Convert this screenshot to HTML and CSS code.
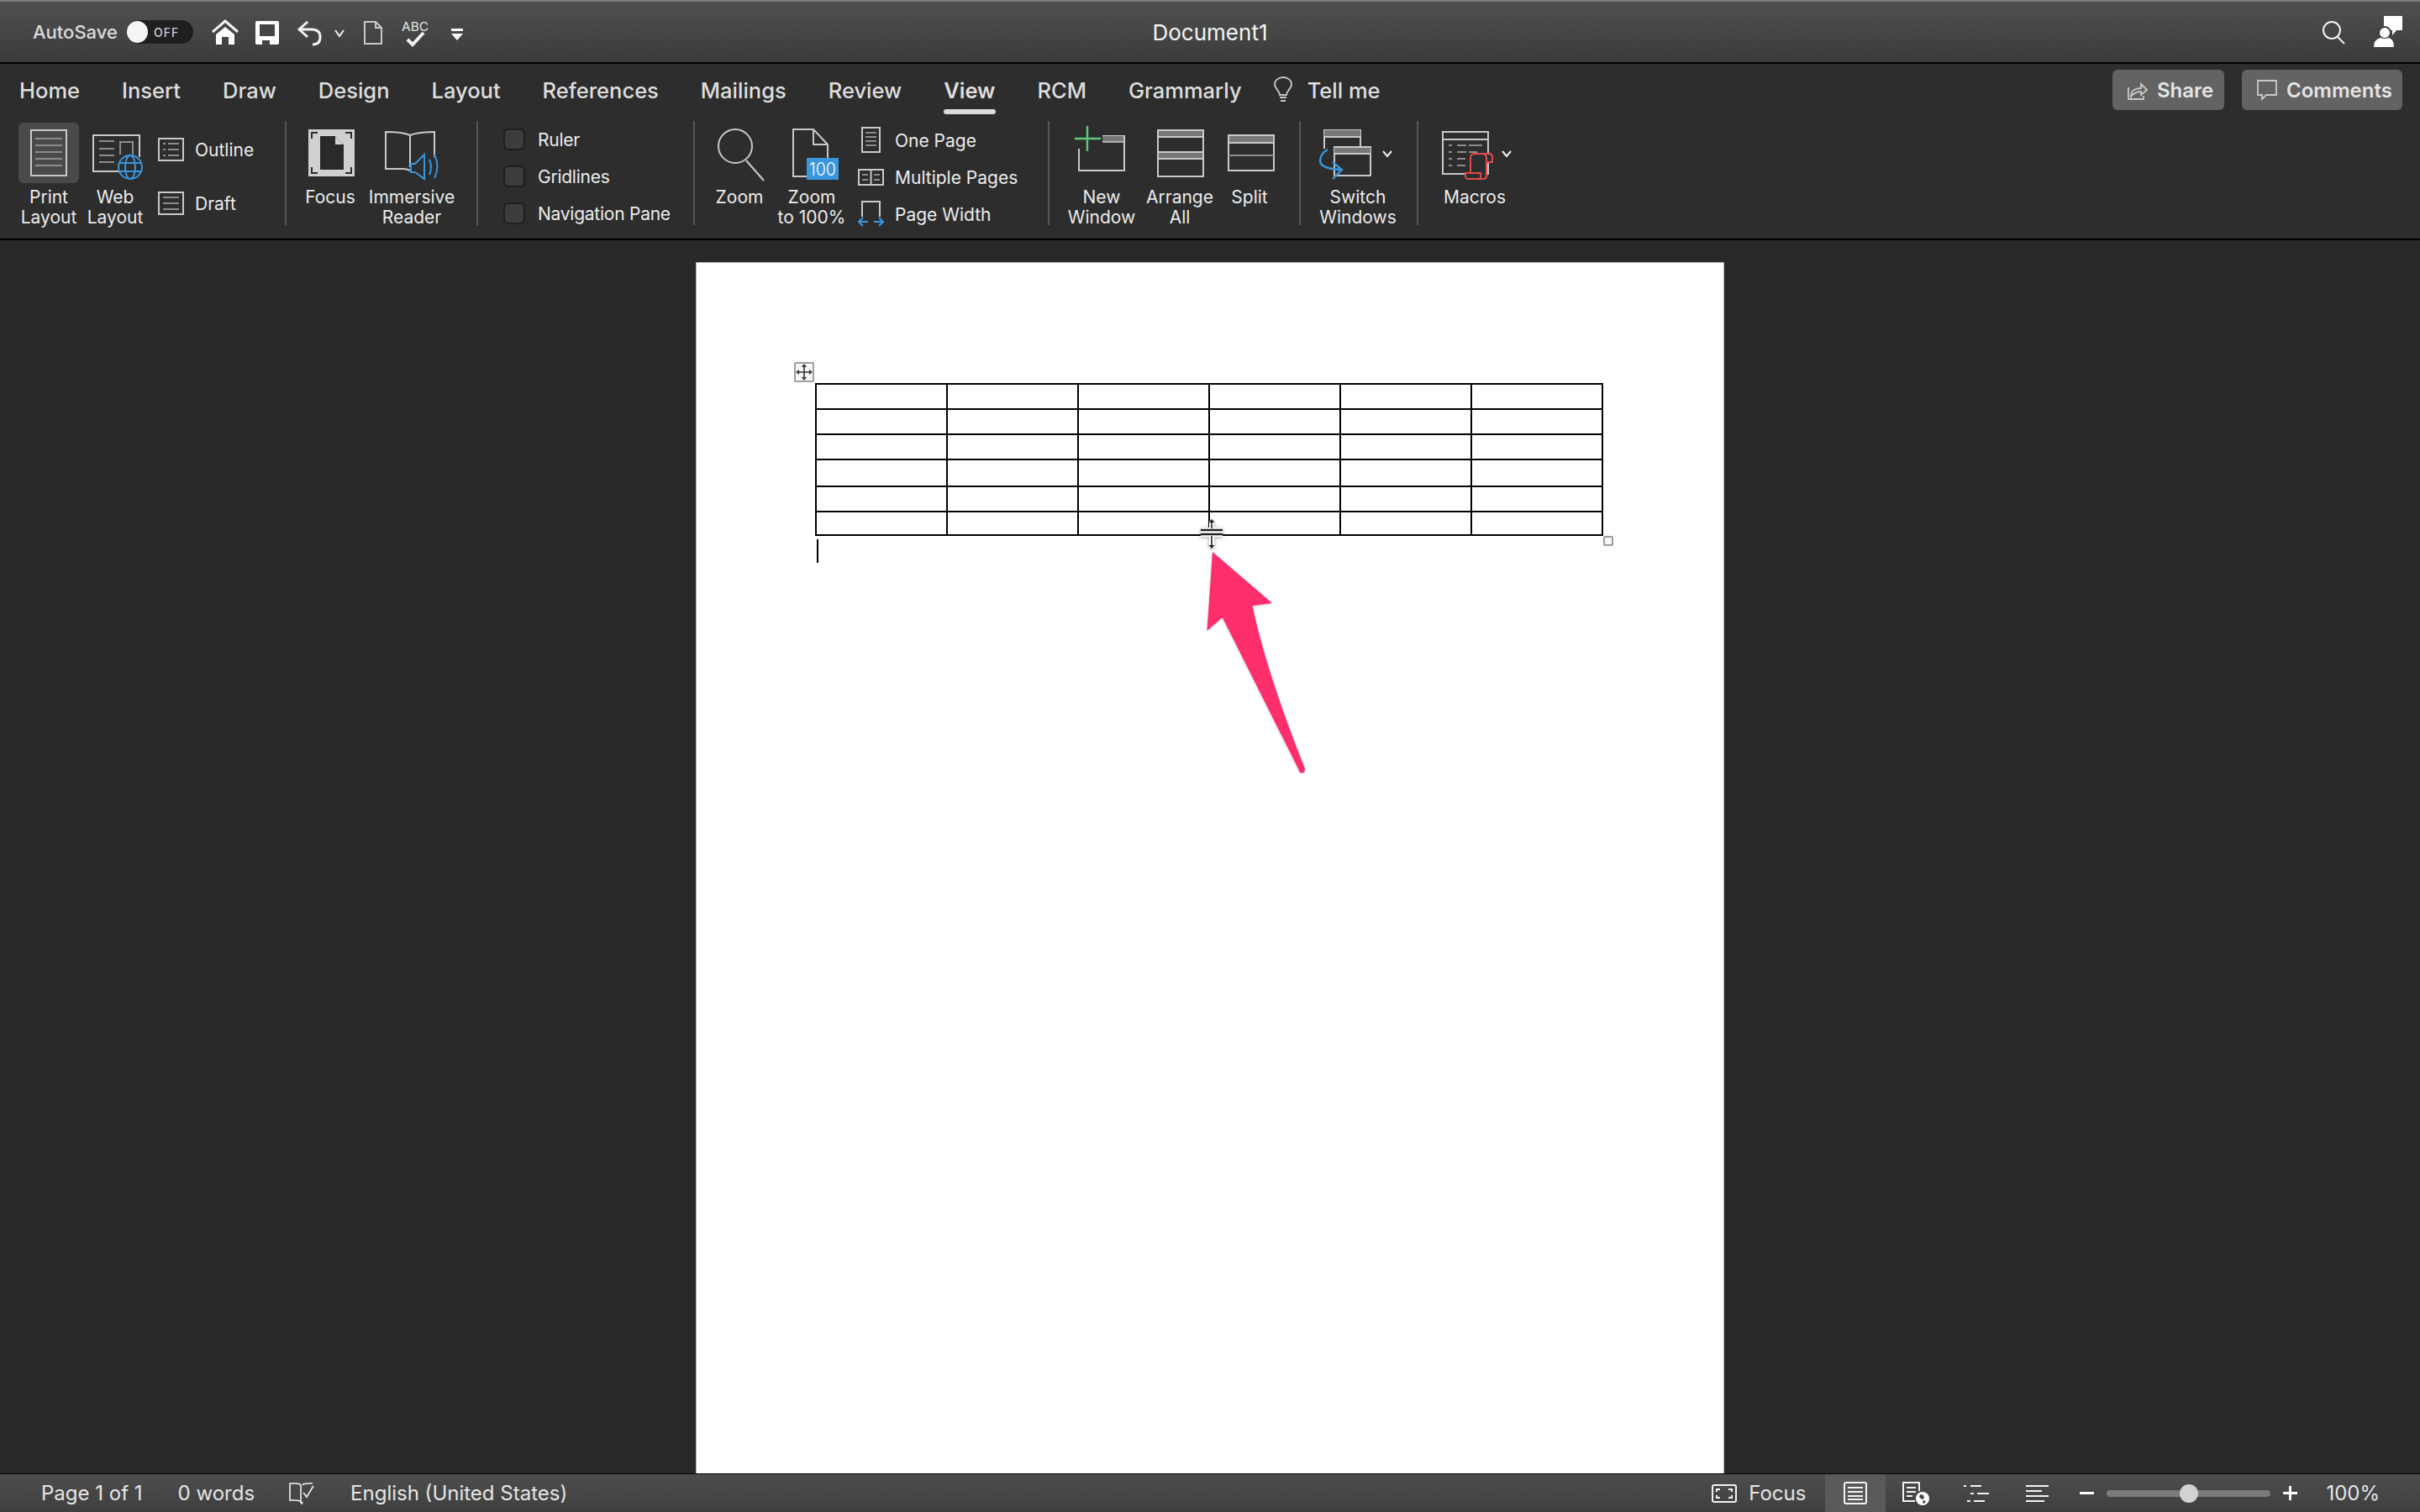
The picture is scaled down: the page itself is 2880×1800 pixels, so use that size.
FILE: index.html
```html
<!DOCTYPE html>
<html>
  <head>
    <title>Document1</title>
    <link rel="stylesheet" href="styles.css">
  </head>
  <body>
    <!-- Title bar -->
    <header class="titlebar">
      <div class="title-left">
        <span class="autosave">AutoSave</span>
        <div class="toggle"><span class="knob"></span><span class="toggle-text">OFF</span></div>
        <svg class="qat" width="52" height="40" viewBox="0 0 52 40"><path class="wh-line thick" d="M1 20L16 7l15 13"/><path class="wh" d="M5 23l11-9 11 9v12h-7v-9h-8v9H5z"/></svg>
        <svg class="qat" width="50" height="40" viewBox="0 0 50 40"><rect class="wh" x="0" y="7" width="28" height="28" rx="2"/><rect class="title-dark" x="5" y="11" width="18" height="14"/><rect class="title-dark" x="8" y="30" width="9" height="5"/></svg>
        <svg class="qat" width="44" height="40" viewBox="0 0 44 40"><path class="wh-line thick" d="M12 8L2 17l10 9M3 17h14q10 0 10 9t-9 9"/></svg>
        <svg class="qat" width="35" height="40" viewBox="0 0 35 40"><path class="wh-line" d="M1 18l5 7 5-7"/></svg>
        <svg class="qat" width="45" height="40" viewBox="0 0 45 40"><path class="ln" d="M1 8h13l7 7v19H1zM14 8v7h7"/></svg>
        <svg class="qat" width="59" height="40" viewBox="0 0 59 40"><text class="abc" x="0" y="19" textLength="32" lengthAdjust="spacingAndGlyphs">ABC</text><path class="wh-line thick4" d="M7 29l6 6L26 21"/></svg>
        <svg class="qat" width="14" height="40" viewBox="0 0 14 40"><rect class="wh" x="0" y="16" width="14" height="3"/><path class="wh" d="M0 22h14l-7 8z"/></svg>
      </div>
      <div class="doc-title">Document1</div>
      <div class="title-right">
        <svg width="28" height="30" viewBox="0 0 28 30"><circle class="wh-line" cx="12" cy="13" r="10"/><path class="wh-line" d="M19 21l8 8"/></svg>
        <svg width="36" height="38" viewBox="0 0 36 38"><path class="wh" d="M13 0h21a1 1 0 0 1 1 1v15a1 1 0 0 1-1 1h-6l-5 6v-6h-10z"/><circle class="wh halo" cx="14" cy="20" r="7"/><path class="wh" d="M1 37q0-9 8-11 5 2 10 0 6 2 6 11z"/></svg>
      </div>
    </header>

    <!-- Ribbon -->
    <section class="ribbon">
      <nav class="tabs">
        <span>Home</span>
        <span>Insert</span>
        <span>Draw</span>
        <span>Design</span>
        <span>Layout</span>
        <span>References</span>
        <span>Mailings</span>
        <span>Review</span>
        <span class="tab-active">View</span>
        <span>RCM</span>
        <span>Grammarly</span>
        <span class="tell-me">
          <svg width="22" height="30" viewBox="0 0 22 30"><path class="ln thin" d="M7 21c0-5-6-7-6-13a10 8 0 0 1 20 0c0 6-6 8-6 13zM7 24h8M8 28h6"/></svg>
          Tell me
        </span>
        <div class="tab-buttons">
          <div class="action-btn btn-share">
            <svg width="24" height="24" viewBox="0 0 24 24"><path class="ln thin" d="M1 9v14h18v-4M4 20c0-7 5-10 12-10V5l7 7-7 6v-4c-6 0-9 2-12 6z"/></svg>
            Share
          </div>
          <div class="action-btn btn-comments">
            <svg width="24" height="24" viewBox="0 0 24 24"><path class="ln thin" d="M1 1h22v17H11l-5 5v-5H1z"/></svg>
            Comments
          </div>
        </div>
      </nav>

      <div class="tools">
        <div class="group group-views">
          <div class="big w-print selected">
            <svg viewBox="0 0 72 72"><rect class="ln" x="15" y="9" width="42" height="54"/><path class="ln-mid" d="M20 19h32M20 27h32M20 35h32M20 43h32M20 51h32"/></svg>
            <div class="label">Print<br>Layout</div>
          </div>
          <div class="big w-web">
            <svg viewBox="0 0 76 72"><path class="ln" d="M54 58H12V15h55v26"/><path class="ln-mid" d="M19 22h18M19 31h18M19 39h18M19 47h18M44 38V23h15v15"/><circle class="globe" cx="56" cy="53" r="14"/><ellipse class="blue" cx="56" cy="53" rx="6" ry="14"/><path class="blue" d="M43 48h26M43 58h26"/></svg>
            <div class="label">Web<br>Layout</div>
          </div>
          <div class="small-col col-views">
            <div class="small-row">
              <svg width="31" height="28" viewBox="0 0 31 28"><rect class="ln" x="1" y="1" width="29" height="26"/><path class="ln-mid" d="M6 7h3M12 7h13M6 14h3M12 14h13M6 21h3M12 21h13"/></svg>
              <span>Outline</span>
            </div>
            <div class="small-row">
              <svg width="31" height="28" viewBox="0 0 31 28"><rect class="ln" x="1" y="1" width="29" height="26"/><path class="ln-mid" d="M6 7h19M6 14h19M6 21h19"/></svg>
              <span>Draft</span>
            </div>
          </div>
        </div>

        <div class="group group-focus">
          <div class="big w-focus">
            <svg viewBox="0 0 60 72"><rect class="focus-bg" x="4" y="8" width="55" height="56"/><path class="focus-page" d="M18 16h18l10 10v30H18z"/><path class="focus-fold" d="M36 16l10 10H36z"/><path class="focus-corner" d="M8 19v-7h7M48 12h7v7M8 53v7h7M48 60h7v-7"/></svg>
            <div class="label">Focus</div>
          </div>
          <div class="big w-immersive">
            <svg viewBox="0 0 112 72"><path class="ln" d="M54 57q-4-2-8-2H25V11q20 0 29 4 9-4 29-4v30M54 15v38"/><path class="blue-fill" d="M55 49h5l11-11v29L60 59h-5z"/><path class="blue" d="M77 44q4 9 0 18M83 38q7 14 0 28"/></svg>
            <div class="label">Immersive<br>Reader</div>
          </div>
        </div>

        <div class="group group-show">
          <div class="check-col">
            <label class="check-row"><span class="check"></span>Ruler</label>
            <label class="check-row"><span class="check"></span>Gridlines</label>
            <label class="check-row"><span class="check"></span>Navigation Pane</label>
          </div>
        </div>

        <div class="group group-zoom">
          <div class="big w-zoom">
            <svg viewBox="0 0 60 72"><circle class="ln" cx="25" cy="28" r="20"/><path class="ln" d="M38 45l21 24"/></svg>
            <div class="label">Zoom</div>
          </div>
          <div class="big w-zoom100">
            <svg viewBox="0 0 84 72"><path class="ln" d="M36 64H20V8h24l17 18v16M44 8v18h17"/><rect class="blue-box" x="36" y="42" width="38" height="26"/><text class="hundred" x="39" y="63" textLength="32" lengthAdjust="spacingAndGlyphs">100</text></svg>
            <div class="label">Zoom<br>to 100%</div>
          </div>
          <div class="page-col">
            <div class="small-row">
              <svg width="31" height="32" viewBox="0 0 31 32"><rect class="ln" x="5" y="1" width="21" height="29"/><path class="ln-mid" d="M9 7h13M9 12h13M9 17h13M9 22h13"/></svg>
              <span>One Page</span>
            </div>
            <div class="small-row">
              <svg width="31" height="32" viewBox="0 0 31 32"><rect class="ln" x="1" y="7" width="29" height="18"/><path class="ln" d="M15.5 7v18"/><path class="ln-mid" d="M5 13h7M5 19h7M19 13h7M19 19h7"/></svg>
              <span>Multiple Pages</span>
            </div>
            <div class="small-row">
              <svg width="31" height="32" viewBox="0 0 31 32"><path class="ln" d="M5 19V1h21v18"/><path class="blue" d="M12 25H1m5-5l-5 5 5 5M19 25h11m-5-5l5 5-5 5"/></svg>
              <span>Page Width</span>
            </div>
          </div>
        </div>

        <div class="group group-window">
          <div class="big w-new">
            <svg viewBox="0 0 84 72"><path class="ln" d="M15 31v26h54V16H43"/><rect class="fl" x="43" y="16" width="25" height="7"/><path class="ln-thin" d="M43 23h26"/><path class="green" d="M10 19h31M25 4v30"/></svg>
            <div class="label">New<br>Window</div>
          </div>
          <div class="big w-arrange">
            <svg viewBox="0 0 72 72"><rect class="fl" x="9" y="8" width="55" height="9"/><rect class="fl" x="9" y="35" width="55" height="8"/><rect class="ln" x="10" y="9" width="54" height="55"/><path class="ln" d="M10 17h54M10 35h54M10 43h54"/></svg>
            <div class="label">Arrange<br>All</div>
          </div>
          <div class="big w-split">
            <svg viewBox="0 0 60 72"><rect class="fl" x="5" y="15" width="54" height="8"/><rect class="ln" x="5" y="15" width="54" height="42"/><path class="ln" d="M5 24h54"/><path class="ln-mid" d="M5 39h54"/></svg>
            <div class="label">Split</div>
          </div>
        </div>

        <div class="group group-switch">
          <div class="big w-switch">
            <svg viewBox="0 0 96 72"><path class="ln" d="M8 31V9h43v19"/><rect class="fl" x="8" y="9" width="43" height="7"/><path class="ln" d="M8 17h43"/><rect class="ln" x="20" y="29" width="43" height="34"/><rect class="fl" x="20" y="30" width="43" height="6"/><path class="ln" d="M20 37h43"/><path class="blue blue-fat" d="M12 32q-9 5-9 14 1 9 26 10M18 47l11 9-11 11"/><path class="wh-line" d="M78 34l5 6 5-6"/></svg>
            <div class="label">Switch<br>Windows</div>
          </div>
        </div>

        <div class="group group-macros">
          <div class="big w-macros">
            <svg viewBox="0 0 90 72"><rect class="ln" x="7" y="11" width="54" height="50"/><path class="ln" d="M7 20h54"/><path class="ln-mid" d="M14 27h4M24 27h11M38 27h16M14 35h4M24 35h11M38 35h10M14 43h4M24 43h10M14 51h4M24 51h10"/><path class="scroll" d="M40 60V42q0-5 5-5h17q4 0 4 4v6h-7v17q0 3-4 3H38q-4 0-4-3v-4h6z"/><path class="scroll-line" d="M59 47v-5q0-5-5-5M40 60h12v7"/><path class="wh-line" d="M78 34l5 6 5-6"/></svg>
            <div class="label">Macros</div>
          </div>
        </div>
      </div>
    </section>

    <!-- Document area -->
    <main class="workspace">
      <div class="page">
        <div class="table-wrap">
          <span class="move-handle">
            <svg width="20" height="20" viewBox="0 0 20 20"><path class="move-line" d="M10 2v16M2 10h16"/><path class="move-head" d="M10 0l3 4H7zM10 20l3-4H7zM0 10l4-3v6zM20 10l-4-3v6z"/></svg>
          </span>
          <span class="resize-handle"></span>
          <table class="doc-table">
            <tr><td></td><td></td><td></td><td></td><td></td><td></td></tr>
            <tr><td></td><td></td><td></td><td></td><td></td><td></td></tr>
            <tr><td></td><td></td><td></td><td></td><td></td><td></td></tr>
            <tr class="row-tall"><td></td><td></td><td></td><td></td><td></td><td></td></tr>
            <tr><td></td><td></td><td></td><td></td><td></td><td></td></tr>
            <tr class="row-short"><td></td><td></td><td></td><td></td><td></td><td></td></tr>
          </table>
          <div class="caret"></div>
        </div>

        <svg class="row-cursor" width="32" height="36" viewBox="0 0 32 36">
          <path class="cursor-halo" d="M16 2v32M3 13h26M3 18h26"/>
          <path class="cursor-line" d="M16 3v8M16 20v12"/>
          <path class="cursor-bar" d="M3 13h26M3 18h26"/>
          <path class="cursor-head" d="M16 0l3.500 4h-7zM16 35l3.500-4h-7z"/>
        </svg>

        <svg class="arrow" width="135" height="280" viewBox="0 0 135 280">
          <path class="arrow-fill" d="M13 7L84 68 60.500 71Q77 150 123 265 123 270 119.500 270 116 270 115 265L24.800 85 6.500 100.700z"/>
        </svg>
      </div>
    </main>

    <!-- Status bar -->
    <footer class="statusbar">
      <span class="stat-pages">Page 1 of 1</span>
      <span class="stat-words">0 words</span>
      <svg class="stat-book" width="30" height="26" viewBox="0 0 30 26"><path class="wh-line thin" d="M14 23q-2-2-7-2H1V1h6q6 0 7 2v20q0 1 1 2 1-1 1-2M16 3q1-2 7-2h5"/><path class="wh-line thin" d="M17 12l4 5 8-13"/></svg>
      <span class="stat-lang">English (United States)</span>

      <div class="stat-right">
        <svg width="30" height="22" viewBox="0 0 30 22"><rect class="wh-line" x="1" y="1" width="28" height="20" rx="2"/><path class="wh-line" d="M6 9V6h4M20 6h4v3M6 13v3h4M24 13v3h-4"/></svg>
        <span class="stat-focus">Focus</span>
        <div class="view-slots">
          <div class="view-slot view-on">
            <svg width="28" height="27" viewBox="0 0 28 27"><rect class="wh-line" x="1" y="1" width="26" height="25" rx="2"/><path class="wh-line" d="M5 7h18M5 12h18M5 17h18M5 21h18"/></svg>
          </div>
          <div class="view-slot">
            <svg width="32" height="28" viewBox="0 0 32 28"><path class="wh-line" d="M15 23H1V1h19v10M5 7h11M5 12h11M5 17h7"/><circle class="wh" cx="24" cy="20" r="8"/><path class="status-dark" d="M21 15l4 1 1 4-3 1-3-3zM25 22l3 1-2 3-2-1z"/></svg>
          </div>
          <div class="view-slot">
            <svg width="32" height="22" viewBox="0 0 32 22"><path class="wh-line" d="M1 2h3M9 2h13M9 11h4M17 11h14M5 20h4M13 20h13"/></svg>
          </div>
          <div class="view-slot">
            <svg width="28" height="22" viewBox="0 0 28 22"><path class="wh-line" d="M1 2h27M1 8h19M1 14h27M1 20h22"/></svg>
          </div>
        </div>
        <div class="zoom-ctrl">
          <svg width="17" height="17" viewBox="0 0 17 17"><rect class="wh" x="0" y="7" width="17" height="3"/></svg>
          <div class="slider"><span class="slider-thumb"></span></div>
          <svg width="17" height="17" viewBox="0 0 17 17"><rect class="wh" x="0" y="7" width="17" height="3"/><rect class="wh" x="7" y="0" width="3" height="17"/></svg>
        </div>
        <span class="stat-zoom">100%</span>
      </div>
    </footer>
  </body>
</html>
```

FILE: styles.css
```css
* {
  box-sizing: border-box;
}

html,
body {
  margin: 0;
  height: 1800px;
  overflow: hidden;
}

body {
  display: flex;
  flex-direction: column;
  font-family: Inter, "Noto Sans", sans-serif;
  color: #e6e6e6;
  background-color: #292929;
}

svg {
  display: block;
  flex: none;
  overflow: visible;
}

/* Shared icon strokes */
.ln {
  fill: none;
  stroke: #c9c9c9;
  stroke-width: 2;
}

.ln.thin {
  stroke-width: 1.8;
}

.ln-mid {
  fill: none;
  stroke: #8c8c8c;
  stroke-width: 2;
}

.ln-thin {
  fill: none;
  stroke: #c9c9c9;
  stroke-width: 1.5;
}

.fl {
  fill: #777;
}

.wh {
  fill: #fff;
}

.wh-line {
  fill: none;
  stroke: #f2f2f2;
  stroke-width: 2;
}

.wh-line.thick {
  stroke-width: 3;
}

.wh-line.thick4 {
  stroke-width: 4;
}

.wh-line.thin {
  stroke-width: 1.6;
}

.blue {
  fill: none;
  stroke: #3a96dd;
  stroke-width: 2;
}

.blue-fat {
  stroke-width: 2.4;
}

.blue-fill {
  fill: #2d2d2d;
  stroke: #3a96dd;
  stroke-width: 2;
}

.green {
  fill: none;
  stroke: #5fc77a;
  stroke-width: 2.4;
}

/* Title bar */
.titlebar {
  display: grid;
  grid-template-columns: 1fr auto 1fr;
  align-items: center;
  height: 76px;
  flex: none;
  border-top: 2px solid #7d7d7d;
  border-bottom: 2px solid #000;
  background: linear-gradient(#505050, #3b3b3b);
}

.title-left {
  display: flex;
  align-items: center;
  padding-left: 39px;
}

.autosave {
  width: 112px;
  font-size: 22px;
  font-weight: 500;
  color: #dcdcdc;
  white-space: nowrap;
}

.toggle {
  display: flex;
  align-items: center;
  width: 79px;
  height: 28px;
  margin-right: 22px;
  border-radius: 14px;
  background-color: #1f1f1f;
}

.knob {
  width: 25px;
  height: 26px;
  border-radius: 50%;
  background-color: #f4f4f4;
}

.toggle-text {
  margin-left: 7px;
  font-size: 14px;
  font-weight: 500;
  letter-spacing: 1px;
  color: #cfcfcf;
}

.qat {
  height: 40px;
}

.title-dark {
  fill: #454545;
}

.abc {
  font-size: 15px;
  fill: #e6e6e6;
}

.doc-title {
  font-size: 26px;
  font-weight: 400;
  color: #f5f5f5;
}

.title-right {
  display: flex;
  justify-content: flex-end;
  align-items: center;
  gap: 33px;
  padding-right: 20px;
}

.halo {
  stroke: #404040;
  stroke-width: 2;
}

/* Ribbon */
.ribbon {
  height: 210px;
  flex: none;
  border-bottom: 2px solid #000;
  background-color: #2d2d2d;
}

.tabs {
  display: flex;
  align-items: center;
  gap: 50px;
  height: 62px;
  padding: 0 21px 0 23px;
  font-size: 25.5px;
  font-weight: 500;
  color: #dedede;
}

.tabs span {
  white-space: nowrap;
}

.tab-active {
  position: relative;
  font-weight: 600;
}

.tab-active::after {
  content: "";
  position: absolute;
  left: 0;
  right: 0;
  bottom: -13px;
  height: 6px;
  border-radius: 3px;
  background-color: #dcdcdc;
}

.tell-me {
  display: flex;
  align-items: center;
  gap: 18px;
  margin-left: -12px;
}

.tab-buttons {
  display: flex;
  gap: 21px;
  margin-left: auto;
}

.action-btn {
  display: flex;
  align-items: center;
  height: 48px;
  border-radius: 6px;
  font-size: 24px;
  font-weight: 600;
  color: #e4e4e4;
  background-color: #636363;
}

.btn-share {
  gap: 11px;
  width: 133px;
  padding-left: 18px;
}

.btn-comments {
  gap: 11px;
  width: 191px;
  padding-left: 18px;
}

.tools {
  display: flex;
  padding: 6px 0 0 0;
  font-size: 21px;
  color: #ececec;
}

.group {
  display: flex;
  height: 124px;
  border-right: 2px solid #555;
}

.group-views {
  width: 341px;
  padding-left: 22px;
}

.group-focus {
  width: 228px;
  padding-left: 22px;
  gap: 11px;
}

.group-show {
  width: 258px;
  padding-left: 30px;
}

.group-zoom {
  width: 422px;
  padding-left: 23px;
  gap: 14px;
}

.group-window {
  width: 299px;
  padding-left: 20px;
  gap: 15px;
}

.group-switch {
  width: 140px;
  padding-left: 20px;
}

.group-macros {
  padding-left: 22px;
  border-right: none;
}

.big {
  display: flex;
  flex-direction: column;
  align-items: center;
  flex: none;
  padding-top: 2px;
  text-align: center;
}

.big svg {
  width: 100%;
  height: 72px;
}

.label {
  margin-top: 5px;
  line-height: 24px;
  white-space: nowrap;
}

.selected svg {
  border-radius: 6px;
  background-color: #4a4a4a;
}

.w-print {
  width: 72px;
}

.w-web {
  width: 76px;
  margin-left: 5px;
}

.w-focus,
.w-zoom,
.w-split {
  width: 60px;
}

.w-immersive {
  width: 112px;
}

.w-zoom100,
.w-new {
  width: 84px;
}

.w-arrange {
  width: 72px;
}

.w-split {
  margin-left: 2px;
}

.w-switch {
  width: 96px;
}

.w-macros {
  width: 90px;
}

.small-col,
.check-col,
.page-col {
  display: flex;
  flex-direction: column;
  white-space: nowrap;
}

.small-row {
  display: flex;
  align-items: center;
  gap: 13px;
}

.col-views {
  margin-left: 13px;
  padding-top: 20px;
  gap: 36px;
}

.check-col {
  padding-top: 9px;
  gap: 18px;
}

.check-row {
  display: flex;
  align-items: center;
  gap: 15px;
  height: 26px;
  letter-spacing: -0.25px;
}

.check {
  width: 26px;
  height: 26px;
  border: 2px solid #1e1e1e;
  border-radius: 6px;
  background-color: #3c3c3c;
}

.page-col {
  margin-left: -1px;
  padding-top: 7px;
  gap: 12px;
}

.focus-bg {
  fill: #d0d0d0;
}

.focus-page {
  fill: #2a2a2a;
}

.focus-fold {
  fill: #d0d0d0;
}

.focus-corner {
  fill: none;
  stroke: #2d2d2d;
  stroke-width: 2;
}

.globe {
  fill: #2d2d2d;
  stroke: #3a96dd;
  stroke-width: 2;
}

.blue-box {
  fill: #3a96dd;
}

.hundred {
  font-size: 22px;
  font-weight: 300;
  fill: #fff;
}

.scroll {
  fill: #2d2d2d;
  stroke: #e04a4a;
  stroke-width: 2;
}

.scroll-line {
  fill: none;
  stroke: #e04a4a;
  stroke-width: 2;
}

/* Document area */
.workspace {
  flex: 1;
  display: flex;
  justify-content: center;
  padding-top: 26px;
  overflow: hidden;
  background-color: #292929;
}

.page {
  position: relative;
  width: 1224px;
  padding: 143px 0 0 141px;
  border: 1px solid #b4b4b4;
  border-bottom: none;
  background-color: #fff;
}

.table-wrap {
  position: relative;
  width: 938px;
}

.doc-table {
  width: 938px;
  table-layout: fixed;
  border-collapse: collapse;
}

.doc-table tr {
  height: 30px;
}

.doc-table .row-tall {
  height: 32px;
}

.doc-table .row-short {
  height: 28px;
}

.doc-table td {
  padding: 0;
  border: 2px solid #000;
}

.caret {
  width: 2px;
  height: 28px;
  margin: 4px 0 0 2px;
  background-color: #000;
}

.move-handle {
  position: absolute;
  left: -25px;
  top: -25px;
  display: flex;
  align-items: center;
  justify-content: center;
  width: 24px;
  height: 24px;
  border: 2px solid #a0a0a0;
  border-radius: 2px;
  background-color: #f6f6f6;
}

.move-line {
  fill: none;
  stroke: #333;
  stroke-width: 1.6;
}

.move-head {
  fill: #333;
}

.resize-handle {
  position: absolute;
  left: 938px;
  top: 182px;
  width: 12px;
  height: 12px;
  border: 2px solid #9c9c9c;
  border-radius: 2px;
  background-color: #f8f8f8;
}

.row-cursor {
  position: absolute;
  left: 597px;
  top: 305px;
  filter: drop-shadow(0 1px 2px rgba(0, 0, 0, 0.35));
}

.cursor-halo {
  fill: none;
  stroke: #fff;
  stroke-width: 6;
}

.cursor-line {
  fill: none;
  stroke: #222;
  stroke-width: 1.6;
}

.cursor-bar {
  fill: none;
  stroke: #222;
  stroke-width: 2.6;
}

.cursor-head {
  fill: #222;
}

.arrow {
  position: absolute;
  left: 601px;
  top: 337px;
  filter: drop-shadow(0 1px 1px rgba(0, 0, 0, 0.25));
}

.arrow-fill {
  fill: #fe2e6c;
}

/* Status bar */
.statusbar {
  display: flex;
  align-items: center;
  height: 46px;
  flex: none;
  padding-left: 49px;
  border-top: 1px solid #000;
  font-size: 24px;
  color: #e6e6e6;
  background: linear-gradient(#4d4d4d, #3f3f3f);
}

.statusbar span {
  white-space: nowrap;
}

.stat-words {
  margin-left: 42px;
}

.stat-book {
  margin-left: 41px;
}

.stat-lang {
  margin-left: 43px;
}

.stat-right {
  display: flex;
  align-items: center;
  height: 100%;
  margin-left: auto;
  padding-right: 48px;
}

.stat-focus {
  margin-left: 14px;
}

.view-slots {
  display: flex;
  height: 100%;
  margin-left: 23px;
}

.view-slot {
  display: flex;
  align-items: center;
  justify-content: center;
  width: 72px;
}

.view-on {
  background-color: #5a5a5a;
}

.status-dark {
  fill: #444;
}

.zoom-ctrl {
  display: flex;
  align-items: center;
  gap: 15px;
  margin-left: 15px;
}

.slider {
  position: relative;
  width: 195px;
  height: 8px;
  border-radius: 4px;
  background-color: #7b7b7b;
}

.slider-thumb {
  position: absolute;
  left: 87px;
  top: -7px;
  width: 22px;
  height: 22px;
  border-radius: 50%;
  background-color: #d2d2d2;
}

.stat-zoom {
  margin-left: 34px;
}
```
